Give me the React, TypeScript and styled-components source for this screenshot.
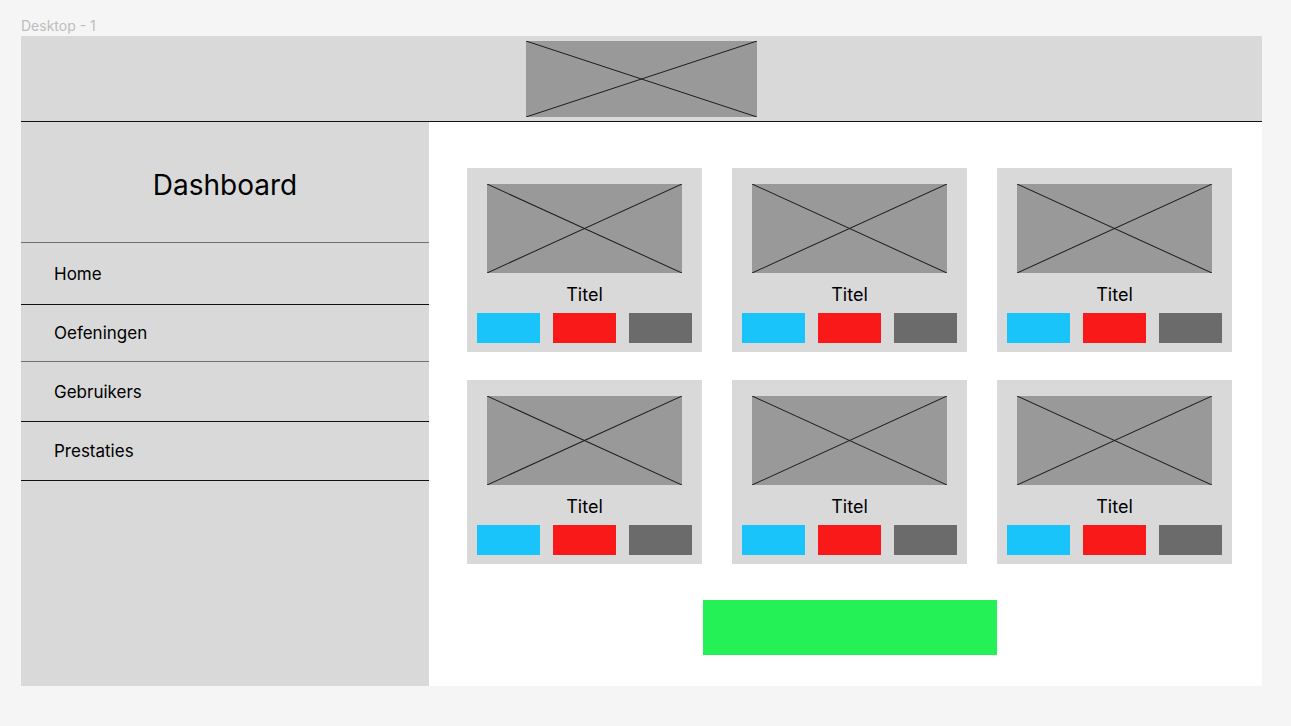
import React from 'react';
import styled, { createGlobalStyle } from 'styled-components';

const GlobalStyle = createGlobalStyle`
  html, body {
    margin: 0;
    padding: 0;
    background: #f5f5f5;
    font-family: Inter, "Noto Sans", "Liberation Sans", sans-serif;
  }
`;

const navItems = [
  { label: 'Home', height: 61, soft: false },
  { label: 'Oefeningen', height: 56, soft: true },
  { label: 'Gebruikers', height: 59, soft: false },
  { label: 'Prestaties', height: 58, soft: false },
];

const cards = [1, 2, 3, 4, 5, 6];

// grijze placeholder met een kruis erin
const Placeholder: React.FC<{ className?: string }> = ({ className }) => (
  <PlaceholderBox className={className}>
    <svg width="100%" height="100%" viewBox="0 0 100 100" preserveAspectRatio="none">
      <line x1="0" y1="0" x2="100" y2="100" stroke="#1c1c1c" strokeWidth="1" vectorEffect="non-scaling-stroke" />
      <line x1="100" y1="0" x2="0" y2="100" stroke="#1c1c1c" strokeWidth="1" vectorEffect="non-scaling-stroke" />
    </svg>
  </PlaceholderBox>
);

const App: React.FC = () => {
  return (
    <>
      <GlobalStyle />
      <Page>
        <FrameLabel>Desktop - 1</FrameLabel>
        <Frame>
          <Header>
            <Logo />
          </Header>
          <Body>
            <Sidebar>
              <SidebarTitle>Dashboard</SidebarTitle>
              {navItems.map((item) => (
                <NavItem key={item.label} $height={item.height} $soft={item.soft}>
                  {item.label}
                </NavItem>
              ))}
            </Sidebar>
            <Main>
              <Content>
                <CardGrid>
                  {cards.map((id) => (
                    <Card key={id}>
                      <CardImage />
                      <CardTitle>Titel</CardTitle>
                      <ButtonRow>
                        <ActionButton $color="#18c4f9" />
                        <ActionButton $color="#f91919" />
                        <ActionButton $color="#6b6b6b" />
                      </ButtonRow>
                    </Card>
                  ))}
                </CardGrid>
                <AddButton />
              </Content>
            </Main>
          </Body>
        </Frame>
      </Page>
    </>
  );
};

export default App;

const Page = styled.div`
  padding: 16px 0 0 21px;
`;

const FrameLabel = styled.div`
  font-size: 14px;
  line-height: 20px;
  color: #bdbdbd;
`;

const Frame = styled.div`
  width: 1241px;
  display: flex;
  flex-direction: column;
`;

const Header = styled.div`
  height: 85px;
  background: #d9d9d9;
  border-bottom: 1px solid #111;
  display: flex;
  justify-content: center;
  align-items: center;
`;

const PlaceholderBox = styled.div`
  background: #999999;
  svg {
    display: block;
  }
`;

const Logo = styled(Placeholder)`
  width: 231px;
  height: 76px;
  margin-left: -1px;
  margin-top: 1px;
`;

const Body = styled.div`
  display: flex;
  height: 564px;
`;

const Sidebar = styled.div`
  width: 408px;
  background: #d9d9d9;
  display: flex;
  flex-direction: column;
`;

const SidebarTitle = styled.div`
  height: 121px;
  box-sizing: border-box;
  border-bottom: 1px solid #6f6f6f;
  display: flex;
  align-items: center;
  justify-content: center;
  padding-top: 6px;
  font-size: 28px;
  color: #000;
`;

const NavItem = styled.div<{ $height: number; $soft: boolean }>`
  height: ${(p) => p.$height + 1}px;
  box-sizing: border-box;
  border-bottom: 1px solid ${(p) => (p.$soft ? '#6f6f6f' : '#111')};
  display: flex;
  align-items: center;
  padding-left: 33px;
  font-size: 17px;
  color: #000;
`;

const Main = styled.div`
  flex: 1;
  background: #fff;
  padding: 46px 0 0 38px;
`;

const Content = styled.div`
  width: 765px;
  display: flex;
  flex-direction: column;
  align-items: center;
`;

const CardGrid = styled.div`
  display: grid;
  grid-template-columns: repeat(3, 235px);
  column-gap: 30px;
  row-gap: 28px;
`;

const Card = styled.div`
  background: #d9d9d9;
  height: 184px;
  box-sizing: border-box;
  padding: 16px 10px 9px;
  display: flex;
  flex-direction: column;
`;

const CardImage = styled(Placeholder)`
  width: 195px;
  height: 89px;
  margin: 0 auto;
`;

const CardTitle = styled.div`
  height: 40px;
  display: flex;
  align-items: center;
  justify-content: center;
  padding-top: 2px;
  box-sizing: border-box;
  font-size: 18px;
  color: #000;
`;

const ButtonRow = styled.div`
  display: grid;
  grid-template-columns: repeat(3, 1fr);
  column-gap: 13px;
`;

const ActionButton = styled.div<{ $color: string }>`
  height: 30px;
  background: ${(p) => p.$color};
`;

const AddButton = styled.div`
  width: 294px;
  height: 55px;
  margin-top: 36px;
  background: #23f155;
`;
